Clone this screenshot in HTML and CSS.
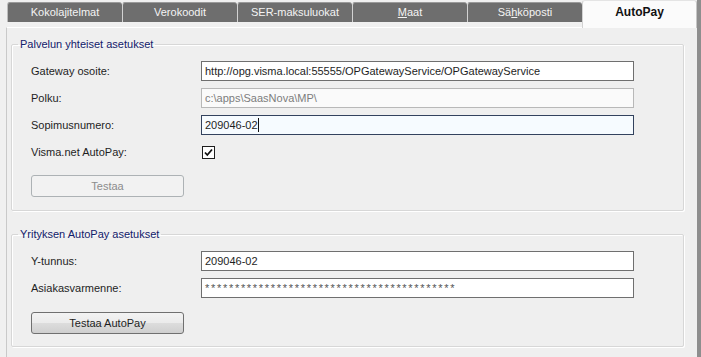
FILE: index.html
```html
<!DOCTYPE html>
<html lang="fi">
<head>
    <meta charset="UTF-8">
    <title>AutoPay</title>
    <link rel="stylesheet" href="styles.css">
</head>
<body>
    <div class="frame">
        <div class="main">
            <div class="tabs">
                <div class="tab">Kokolajitelmat</div>
                <div class="tab">Verokoodit</div>
                <div class="tab">SER-maksuluokat</div>
                <div class="tab"><u>M</u>aat</div>
                <div class="tab">Sä<u>h</u>köposti</div>
                <div class="tab active">AutoPay</div>
            </div>

            <div class="panel">
                <fieldset class="group">
                    <legend>Palvelun yhteiset asetukset</legend>
                    <div class="row">
                        <label>Gateway osoite:</label>
                        <div class="field">http://opg.visma.local:55555/OPGatewayService/OPGatewayService</div>
                    </div>
                    <div class="row">
                        <label>Polku:</label>
                        <div class="field disabled">c:\apps\SaasNova\MP\</div>
                    </div>
                    <div class="row">
                        <label>Sopimusnumero:</label>
                        <div class="field focused">209046-02<span class="caret"></span></div>
                    </div>
                    <div class="row">
                        <label>Visma.net AutoPay:</label>
                        <div class="check">
                            <svg width="13" height="13" viewBox="0 0 13 13">
                                <rect x="0.5" y="0.5" width="12" height="12" fill="#fff" stroke="#1e1e1e"/>
                                <path d="M3 6.5 L5.3 9 L10 3.5" fill="none" stroke="#111" stroke-width="1.8"/>
                            </svg>
                        </div>
                    </div>
                    <button class="btn" disabled>Testaa</button>
                </fieldset>

                <fieldset class="group second">
                    <legend>Yrityksen AutoPay asetukset</legend>
                    <div class="row">
                        <label>Y-tunnus:</label>
                        <div class="field">209046-02</div>
                    </div>
                    <div class="row">
                        <label>Asiakasvarmenne:</label>
                        <div class="field secret">******************************************</div>
                    </div>
                    <button class="btn">Testaa AutoPay</button>
                </fieldset>
            </div>
        </div>
        <div class="edge"></div>
    </div>
</body>
</html>
```

FILE: styles.css
```css
body {
    margin: 0;
    background-color: #f0f0f0;
    font-family: "Liberation Sans", Arial, sans-serif;
    font-size: 11px;
    color: #1e1e1e;
    overflow: hidden;
}
.frame {
    display: flex;
    height: 357px;
}
.main {
    width: 697px;
}
.edge {
    flex: 1;
    background-color: #8e8e8e; /* scrollbar edge */
}

/* tab strip */
.tabs {
    display: flex;
    padding-left: 7px;
    height: 27px;
}
.tab {
    width: 114px;
    height: 19px;
    margin-top: 2px;
    background-color: #6e6e6e;
    color: #f4f4f4;
    border-left: 1px solid #d2d2d2;
    border-top: 1px solid #9a9a9a;
    border-radius: 3px 3px 0 0;
    text-align: center;
    line-height: 19px;
}
.tab:first-child {
    border-left-color: #bdbdbd;
}
.tab.active {
    width: 113px;
    height: 27px;
    margin-top: 0;
    background-color: #fbfbfb;
    color: #111;
    font-size: 12px;
    font-weight: bold;
    line-height: 23px;
    border-top-color: #e4e4e4;
    border-right: 1px solid #c6c6c6;
}

/* main panel */
.panel {
    margin-left: 6px;
    height: 329px;
    border-left: 1px solid #c9c9c9;
    border-top: 1px solid #ffffff;
    background-color: #efefef;
    padding: 9px 13px 0 4px;
}
.group {
    margin: 0 0 16px 0;
    padding: 10px 0 13px 0;
    border: 1px solid #d7d7d7;
    box-shadow: inset 1px 1px 0 #fff, 1px 1px 0 #fff;
    border-radius: 2px;
    min-width: 0;
}
.group.second {
    padding-bottom: 12px;
}
.group legend {
    padding: 0 2px;
    margin-left: 6px;
    color: #12206a;
    line-height: 14px;
}
.row {
    display: flex;
    align-items: center;
    height: 20px;
    margin: 0 0 7px 19px;
}
.row label {
    width: 170px;
}
.field {
    width: 425px;
    height: 18px;
    line-height: 18px;
    padding: 0 3px;
    border: 1px solid #6f6f6f;
    background-color: #fff;
    white-space: nowrap;
    overflow: hidden;
}
.field.disabled {
    border-color: #b8b8b8;
    background-color: #fafafa;
    color: #7d7d7d;
}
.field.focused {
    border-color: #33425e;
    background-color: #f6fbff;
}
.caret {
    display: inline-block;
    width: 1px;
    height: 14px;
    background-color: #111;
    vertical-align: -3px;
}
.secret {
    letter-spacing: 1.7px;
    color: #555;
}
.check {
    display: flex;
    padding-left: 1px;
}
.check svg {
    display: block;
}

/* buttons */
.btn {
    display: block;
    width: 153px;
    height: 22px;
    margin: 13px 0 0 19px;
    border: 1px solid #707070;
    border-radius: 3px;
    background: linear-gradient(#f3f3f3, #ebebeb 50%, #dddddd 50%, #cfcfcf);
    font-family: "Liberation Sans", Arial, sans-serif;
    font-size: 11px;
    color: #1e1e1e;
    padding: 0;
}
.second .btn {
    margin-top: 14px;
}
.btn:disabled {
    border-color: #adb2b5;
    background: #f2f2f2;
    color: #8c8c8c;
}
```
